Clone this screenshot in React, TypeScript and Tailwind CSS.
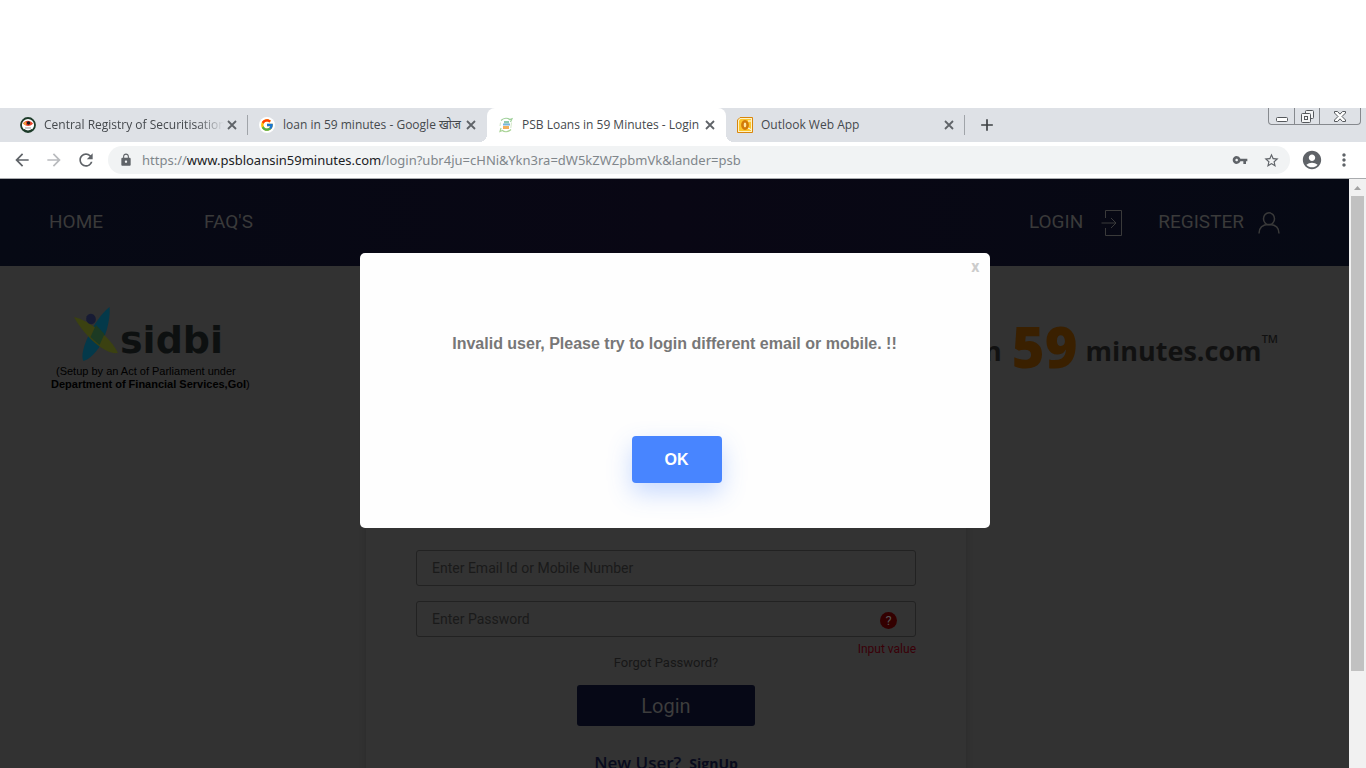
import React from "react";
import {
  MdAccountCircle,
  MdAdd,
  MdArrowBack,
  MdArrowForward,
  MdLock,
  MdMoreVert,
  MdRefresh,
  MdStarBorder,
  MdVpnKey,
} from "react-icons/md";
import { FcGoogle } from "react-icons/fc";

function RegistryIcon() {
  return (
    <svg viewBox="0 0 16 16" className="size-4">
      <circle cx="8" cy="8" r="7" fill="#fff" stroke="#1d3b2a" strokeWidth="1.8" />
      <path d="M3 6.500C5 3 10 2.500 13 6.500 11 9.500 6 10 3 6.500Z" fill="#e8452c" />
      <path d="M3 6.500 6 4.500 6 8.500Z" fill="#f4a63a" />
      <circle cx="8.500" cy="6" r="1.700" fill="#1b1b1b" />
      <path d="M5 11h6" stroke="#999" strokeWidth="1" />
      <path d="M4 12.500c2 2 6 2 8 0" stroke="#1d3b2a" strokeWidth="1.200" fill="none" />
    </svg>
  );
}

function GoogleIcon() {
  return (
    <span className="flex size-4 items-center justify-center rounded-full bg-white">
      <FcGoogle size={14} />
    </span>
  );
}

function PsbIcon() {
  return (
    <svg viewBox="0 0 16 16" className="size-4">
      <path d="M3 3.500C6 .5 10 .8 11.500 2.500L14 1.800 12.500 5" fill="none" stroke="#9fd09a" strokeWidth="1.200" />
      <path d="M13 12.500C10 15.500 6 15.200 4.500 13.500L2 14.500 3 11" fill="none" stroke="#a9d396" strokeWidth="1.200" />
      <path d="M13.500 5.500 12.800 11M2.500 5.500 2 9" stroke="#d3e8c7" strokeWidth="1" />
      <rect x="6" y="4" width="5" height="2.500" fill="#8cc9b0" />
      <rect x="5" y="6.500" width="7" height="2" fill="#7ab6dc" />
      <rect x="5" y="9" width="6" height="3" fill="#f2ae5a" />
    </svg>
  );
}

function OutlookIcon() {
  return (
    <svg viewBox="0 0 16 16" className="size-4">
      <path d="M3 .5h12.500v15H.5V3Z" fill="#fff3c4" stroke="#d9860d" />
      <path d="M3.500 2H14v12H2V3.500Z" fill="#fbc52c" />
      <path d="M11 4h3M11 11l3 1.500" stroke="#fff" strokeWidth="1" />
      <ellipse cx="8" cy="8" rx="2.600" ry="3.700" fill="#ffe7a0" stroke="#d27a09" strokeWidth="2.600" />
    </svg>
  );
}

const tabs = [
  { title: "Central Registry of Securitisation", icon: <RegistryIcon /> },
  { title: "loan in 59 minutes - Google खोज", icon: <GoogleIcon /> },
  { title: "PSB Loans in 59 Minutes - Login", icon: <PsbIcon />, active: true },
  { title: "Outlook Web App", icon: <OutlookIcon /> },
];

const activeTab =
  "relative rounded-t-lg bg-white before:absolute before:bottom-0 before:-left-2 before:size-2 before:bg-[radial-gradient(circle_at_0_0,transparent_8px,white_8px)] after:absolute after:bottom-0 after:-right-2 after:size-2 after:bg-[radial-gradient(circle_at_100%_0,transparent_8px,white_8px)]";

function TabStrip() {
  return (
    <div className="flex h-[34px] items-stretch bg-[#dee1e6] pr-[5px] pl-[9px] font-['Open_Sans','Noto_Sans',sans-serif]">
      {tabs.map((tab, i) => (
        <div
          key={tab.title}
          className={`flex w-[239px] items-center pl-[11px] ${tab.active ? activeTab : ""}`}
        >
          {tab.icon}
          <span
            className={`ml-2 w-[180px] overflow-hidden text-xs whitespace-nowrap text-[#45494d] ${
              i === 0 ? "mask-r-from-85%" : ""
            }`}
          >
            {tab.title}
          </span>
          <button aria-label="Close tab" className="text-[#5f6368]">
            <svg viewBox="0 0 16 16" className="size-4" fill="none" stroke="currentColor" strokeWidth="1.8">
              <path d="M4 4l8 8M12 4l-8 8" />
            </svg>
          </button>
          {(i === 0 || i === 3) && <span className="ml-auto h-5 w-px bg-[#a0a4a9]" />}
        </div>
      ))}
      <button aria-label="New tab" className="flex w-11 items-center justify-center text-[#3c4043]">
        <MdAdd size={20} />
      </button>
      <div className="ml-auto flex h-[17px] rounded-b border border-t-0 border-[#86898e] text-[#55585c]">
        <button aria-label="Minimize" className="flex w-[25px] items-center justify-center">
          <svg viewBox="0 0 12 12" className="size-3" fill="#fff" stroke="currentColor">
            <rect x=".5" y="7.500" width="11" height="4" rx="1" />
          </svg>
        </button>
        <button
          aria-label="Restore"
          className="flex w-[26px] items-center justify-center border-x border-[#86898e]"
        >
          <svg viewBox="0 0 13 13" className="size-[13px]" fill="#f4f5f6" stroke="currentColor">
            <rect x="4.500" y=".5" width="8" height="8" rx="1" />
            <rect x=".5" y="3.500" width="9" height="9" rx="1" />
            <rect x="3.500" y="6.500" width="3" height="3" />
          </svg>
        </button>
        <button aria-label="Close" className="flex w-10 items-center justify-center">
          <svg viewBox="0 0 12 11" className="h-[11px] w-3" fill="#fff" stroke="currentColor">
            <path d="M.5.5h3L6 3.200 8.500.5h3v1.500L8 5.500 11.500 9v1.500h-3L6 7.800 3.500 10.500h-3V9L4 5.500.5 2Z" />
          </svg>
        </button>
      </div>
    </div>
  );
}

function Toolbar() {
  return (
    <div className="flex h-[37px] items-center border-b border-[#a9abae] bg-white px-[6px] text-[#5f6368]">
      <button aria-label="Back" className="flex w-8 justify-center">
        <MdArrowBack size={20} />
      </button>
      <button aria-label="Forward" className="flex w-8 justify-center text-[#b9bbbe]">
        <MdArrowForward size={20} />
      </button>
      <button aria-label="Reload" className="flex w-8 justify-center">
        <MdRefresh size={20} />
      </button>
      <div className="mx-[6px] flex h-7 flex-1 items-center rounded-full bg-[#f1f3f4] pr-[10px] pl-[11px]">
        <MdLock size={14} />
        <p className="ml-[9px] flex-1 pt-px font-['Noto_Sans',sans-serif] text-[13px] whitespace-nowrap text-[#80868b]">
          https://<span className="text-[#202124]">www.psbloansin59minutes.com</span>
          /login?ubr4ju=cHNi&amp;Ykn3ra=dW5kZWZpbmVk&amp;lander=psb
        </p>
        <button aria-label="Saved passwords" className="mr-[15px]">
          <MdVpnKey size={16} />
        </button>
        <button aria-label="Bookmark this page">
          <MdStarBorder size={17} />
        </button>
      </div>
      <button aria-label="Profile" className="flex w-8 justify-center">
        <MdAccountCircle size={22} />
      </button>
      <button aria-label="Menu" className="flex w-8 justify-center">
        <MdMoreVert size={20} />
      </button>
    </div>
  );
}

function SiteHeader() {
  return (
    <header className="flex h-[87px] items-center bg-linear-to-r from-[#060914] via-[#090714] to-[#060914] pr-[69px] pl-[49px] font-[Roboto,sans-serif] text-[19px] text-[#3a3a3a]">
      <a href="#home">HOME</a>
      <a href="#faq" className="ml-[101px]">
        FAQ'S
      </a>
      <a href="#login" className="ml-auto flex items-center gap-[18px]">
        LOGIN
        <svg viewBox="0 0 21 26" className="h-[26px] w-[21px]" fill="none" stroke="currentColor">
          <path d="M4.500 8V.5h16v25h-16V18M.5 13h14M10 8l5 5-5 5" />
        </svg>
      </a>
      <a href="#register" className="ml-9 flex items-center gap-[14px]">
        REGISTER
        <svg viewBox="0 0 22 22" className="size-[22px]" fill="none" stroke="currentColor" strokeWidth="1.500">
          <ellipse cx="11" cy="6.800" rx="5.500" ry="6" />
          <path d="M1 21.500C1 15.500 5 12.500 11 12.500S21 15.500 21 21.500" />
        </svg>
      </a>
    </header>
  );
}

function Logos() {
  return (
    <div className="flex h-36 items-start justify-between pr-[71px] pl-[51px]">
      <div className="pt-10 font-['Liberation_Sans',sans-serif] text-[11px] leading-[13px] text-black">
        <div className="flex pl-[22px]">
          <svg viewBox="0 0 46 56" className="h-14 w-[46px]">
            <path d="M36.500 1C38 15 30 48 10.500 55 5 47 21 13 36.500 1Z" fill="#04394a" />
            <path d="M1 11C16 14 38 32 45 47 31 49 10 28 1 11Z" fill="#3b4111" />
            <path d="M23 19 31.500 28 26.500 39 17.500 31Z" fill="#1c3a23" />
            <ellipse cx="18" cy="13" rx="4.800" ry="5.300" transform="rotate(-15 18 13)" fill="#171b34" />
          </svg>
          <span className="pt-3 pl-px font-['DejaVu_Sans',sans-serif] text-[38px] leading-[44px] font-bold text-[#0d1010]">
            sidbi
          </span>
        </div>
        <p className="pt-[3px] pl-[5px]">(Setup by an Act of Parliament under</p>
        <p>
          <b>Department of Financial Services,GoI</b>)
        </p>
      </div>
      <div className="flex items-center pt-[52px] font-['Open_Sans',sans-serif] text-[27px] leading-none font-bold text-[#111]">
        <span>in</span>
        <span className="mr-2 ml-[10px] pb-2 text-[56px] leading-none font-extrabold text-[#3a2000]">59</span>
        <span>minutes.com</span>
        <span className="self-start pt-[15px] text-[11px] leading-none font-semibold">TM</span>
      </div>
    </div>
  );
}

const field =
  "h-9 w-full rounded-[3px] border border-[#222] bg-transparent px-[15px] font-[Roboto,sans-serif] text-sm text-[#1a1a1a] outline-none placeholder:text-[#1a1a1a]";

function LoginForm() {
  return (
    <form
      onSubmit={(e) => e.preventDefault()}
      className="mx-auto flex w-[600px] flex-col items-center bg-[#333] px-[50px] pt-[140px] pb-16 shadow-[0_0_5px_#2b2b2b]"
    >
      <input aria-label="Email Id or Mobile Number" placeholder="Enter Email Id or Mobile Number" className={field} />
      <div className="relative mt-[15px] w-full">
        <input type="password" aria-label="Password" placeholder="Enter Password" className={field} />
        <span className="absolute top-[11px] right-[19px] flex size-[17px] items-center justify-center rounded-full bg-[#330000] font-[Roboto,sans-serif] text-[13px] text-[#555]">
          ?
        </span>
      </div>
      <p className="mt-1 self-end font-[Roboto,sans-serif] text-xs leading-4 text-[#3a0008]">Input value</p>
      <a href="#forgot" className="-mt-1 font-[Roboto,sans-serif] text-[13px] leading-5 text-[#171717]">
        Forgot Password?
      </a>
      <button className="mt-3 h-[41px] w-[178px] rounded-[3px] bg-[#060816] font-[Roboto,sans-serif] text-xl text-[#3d3d3d]">
        Login
      </button>
      <p className="mt-6 flex items-baseline gap-2 font-['Open_Sans',sans-serif] text-[17px] font-semibold text-[#080a1c]">
        New User?
        <a href="#signup" className="text-sm font-bold">
          SignUp
        </a>
      </p>
    </form>
  );
}

function Dialog() {
  return (
    <div className="absolute inset-0 flex items-start justify-center pt-[74px]">
      <div
        role="dialog"
        aria-modal="true"
        aria-labelledby="message"
        className="flex h-[275px] w-[630px] flex-col rounded-[5px] bg-[#fefefe] font-['Liberation_Sans',sans-serif]"
      >
        <button
          aria-label="Dismiss"
          className="mt-1 mr-[10px] self-end font-[Roboto,sans-serif] text-base leading-5 font-bold text-[#ccc]"
        >
          x
        </button>
        <p id="message" className="mt-[55px] text-center text-base font-bold text-[#777]">
          Invalid user, Please try to login different email or mobile. !!
        </p>
        <button className="mt-20 ml-[272px] h-[47px] w-[90px] rounded bg-[#4885ff] text-base font-bold text-white shadow-[0_10px_24px_rgba(72,133,255,0.3)]">
          OK
        </button>
      </div>
    </div>
  );
}

function Scrollbar() {
  return (
    <div className="flex w-[17px] flex-col bg-[#f1f1f1]">
      <svg viewBox="0 0 17 17" className="size-[17px] shrink-0">
        <path d="M5 11h7L8.500 7Z" fill="#a3a3a3" />
      </svg>
      <div className="min-h-0 flex-1 px-[2px]">
        <div className="h-[83%] bg-[#c1c1c1]" />
      </div>
    </div>
  );
}

export default function App() {
  return (
    <div className="flex h-screen flex-col overflow-hidden bg-white pt-[108px]">
      <TabStrip />
      <Toolbar />
      <div className="flex min-h-0 flex-1">
        <main className="relative flex-1 overflow-hidden bg-[#323232]">
          <SiteHeader />
          <Logos />
          <div className="pr-[17px]">
            <LoginForm />
          </div>
          <Dialog />
        </main>
        <Scrollbar />
      </div>
    </div>
  );
}
